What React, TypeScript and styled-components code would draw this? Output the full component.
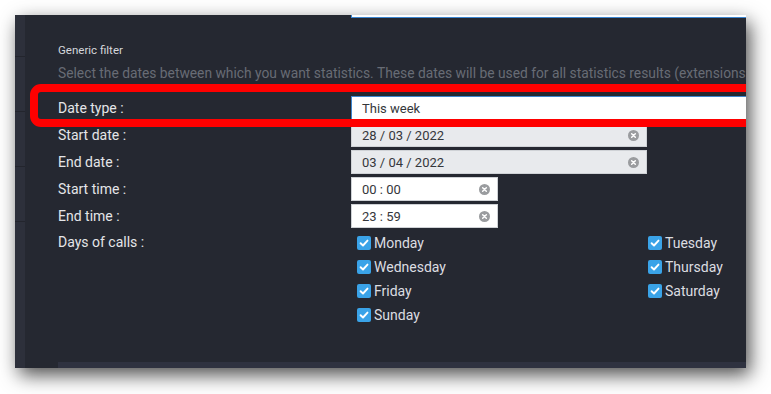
import React from "react";
import styled, { createGlobalStyle } from "styled-components";

const GlobalStyle = createGlobalStyle`
  html, body {
    margin: 0;
    padding: 0;
    background: #ffffff;
    font-family: Roboto, "Liberation Sans", sans-serif;
  }
`;

type DateField = { label: string; value: string; kind: "date" | "time" };

const FIELDS: DateField[] = [
  { label: "Start date :", value: "28 / 03 / 2022", kind: "date" },
  { label: "End date :", value: "03 / 04 / 2022", kind: "date" },
  { label: "Start time :", value: "00 : 00", kind: "time" },
  { label: "End time :", value: "23 : 59", kind: "time" },
];

const DAYS = [
  "Monday",
  "Tuesday",
  "Wednesday",
  "Thursday",
  "Friday",
  "Saturday",
  "Sunday",
];

function ClearIcon() {
  return (
    <svg width="11" height="11" viewBox="0 0 12 12">
      <circle cx="6" cy="6" r="6" fill="#9a9c9f" />
      <path
        d="M4 4L8 8M8 4L4 8"
        stroke="#ffffff"
        strokeWidth="1.6"
        strokeLinecap="round"
      />
    </svg>
  );
}

function CheckMark() {
  return (
    <svg width="10" height="10" viewBox="0 0 10 10">
      <path
        d="M1.6 5.2L4 7.5L8.5 2.6"
        fill="none"
        stroke="#ffffff"
        strokeWidth="1.9"
        strokeLinecap="round"
        strokeLinejoin="round"
      />
    </svg>
  );
}

export default function App() {
  return (
    <S.Page>
      <GlobalStyle />
      <S.Window>
        <S.Strip>
          <S.StripRow $first />
          <S.StripRow />
          <S.StripRow />
          <S.StripRow />
        </S.Strip>
        <S.Panel>
          <S.PrevRow>
            <S.Label />
            <S.Input $kind="select" />
          </S.PrevRow>
          <S.SectionTitle>Generic filter</S.SectionTitle>
          <S.Description>
            Select the dates between which you want statistics. These dates
            will be used for all statistics results (extensions, queues,
            agents)
          </S.Description>
          <S.Form>
            <S.Row>
              <S.Label>Date type :</S.Label>
              <S.Input $kind="select">
                <S.Value>This week</S.Value>
              </S.Input>
            </S.Row>
            {FIELDS.map((f) => (
              <S.Row key={f.label}>
                <S.Label>{f.label}</S.Label>
                <S.Input $kind={f.kind}>
                  <S.Value>{f.value}</S.Value>
                  <ClearIcon />
                </S.Input>
              </S.Row>
            ))}
            <S.DaysRow>
              <S.Label>Days of calls :</S.Label>
              <S.DaysGrid>
                {DAYS.map((d) => (
                  <S.Day key={d}>
                    <S.Box>
                      <CheckMark />
                    </S.Box>
                    {d}
                  </S.Day>
                ))}
              </S.DaysGrid>
            </S.DaysRow>
          </S.Form>
          <S.NextSection />
        </S.Panel>
        <S.Highlight />
      </S.Window>
    </S.Page>
  );
}

const S = {
  Page: styled.div`
    width: 771px;
    height: 394px;
    padding: 15px 0 0 15px;
    box-sizing: border-box;
    overflow: hidden;
  `,
  Window: styled.div`
    position: relative;
    display: flex;
    width: 731px;
    height: 353px;
    overflow: hidden;
    background-color: #252831;
    box-shadow: 4px 7px 18px rgba(0, 0, 0, 0.7);
  `,
  Strip: styled.div`
    flex: 0 0 10px;
    display: flex;
    flex-direction: column;
    background-color: #2d303b;
  `,
  StripRow: styled.div<{ $first?: boolean }>`
    flex: 0 0 auto;
    height: 54px;
    margin-top: ${({ $first }) => ($first ? "-13px" : "0")};
    border-bottom: 1px solid #23252d;
  `,
  Panel: styled.div`
    flex: 1;
    min-width: 0;
    display: flex;
    flex-direction: column;
    padding-left: 33px;
  `,
  PrevRow: styled.div`
    display: flex;
    margin-top: -21px;
    height: 24px;
  `,
  SectionTitle: styled.div`
    margin-top: 24px;
    font-size: 11.5px;
    line-height: 16px;
    color: #d4d6db;
  `,
  Description: styled.div`
    margin-top: 5px;
    font-size: 13.8px;
    line-height: 20px;
    color: #686c75;
    white-space: nowrap;
  `,
  Form: styled.div`
    margin-top: 13px;
    display: flex;
    flex-direction: column;
    gap: 3px;
  `,
  Row: styled.div`
    display: flex;
    align-items: center;
    height: 24px;
  `,
  Label: styled.div`
    flex: 0 0 293px;
    font-size: 14px;
    line-height: 20px;
    color: #e4e5e8;
  `,
  Input: styled.div<{ $kind: "select" | "date" | "time" }>`
    box-sizing: border-box;
    display: flex;
    align-items: center;
    justify-content: space-between;
    flex: 0 0 auto;
    height: 24px;
    width: ${({ $kind }) =>
      $kind === "select" ? "440px" : $kind === "date" ? "296px" : "147px"};
    padding: 0 7px 0 10px;
    background-color: ${({ $kind }) =>
      $kind === "date" ? "#e8eaed" : "#ffffff"};
    border: 1px solid
      ${({ $kind }) => ($kind === "select" ? "#3d86cf" : "#cfd2d6")};
    & > svg {
      flex: 0 0 auto;
    }
  `,
  Value: styled.span`
    font-size: 13px;
    color: #35373b;
  `,
  DaysRow: styled.div`
    display: flex;
    align-items: flex-start;
    margin-top: 1px;
  `,
  DaysGrid: styled.div`
    display: grid;
    grid-template-columns: 291px 120px;
    grid-auto-rows: 24px;
    margin-left: 6px;
    margin-top: -1px;
  `,
  Day: styled.div`
    display: flex;
    align-items: center;
    gap: 3px;
    font-size: 14px;
    color: #dcdde1;
  `,
  Box: styled.span`
    display: flex;
    align-items: center;
    justify-content: center;
    width: 14px;
    height: 14px;
    border-radius: 2px;
    background-color: #3aa3e8;
  `,
  NextSection: styled.div`
    margin-top: auto;
    height: 6px;
    background-color: #2f3240;
  `,
  Highlight: styled.div`
    position: absolute;
    left: 15px;
    top: 69px;
    width: 760px;
    height: 43px;
    box-sizing: border-box;
    border: 8px solid #ff0000;
    border-radius: 11px;
    pointer-events: none;
  `,
};
